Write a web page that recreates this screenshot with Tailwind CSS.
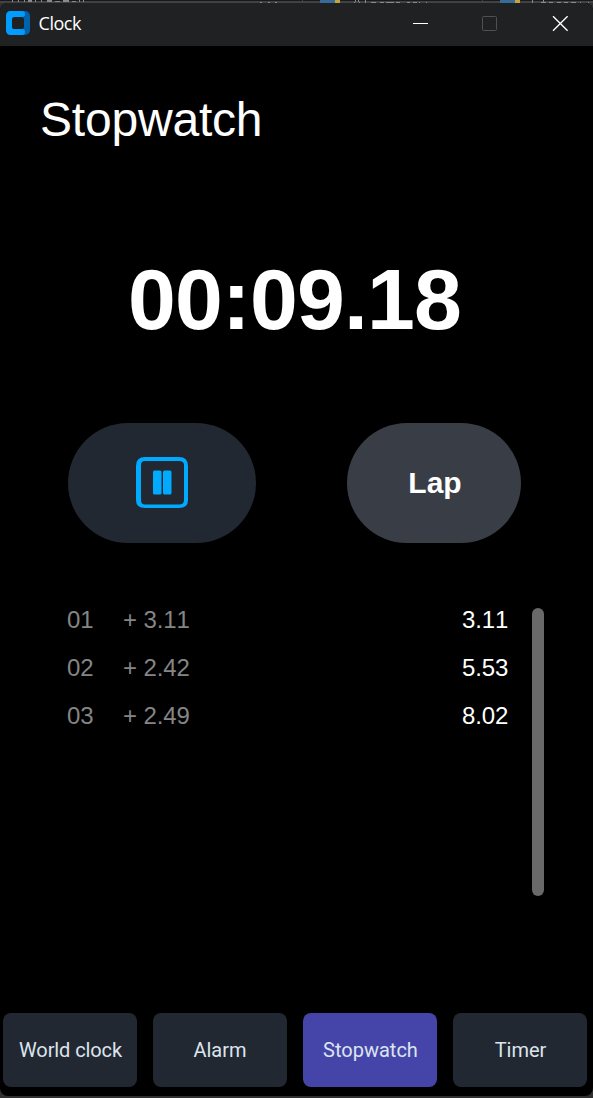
<!DOCTYPE html>
<html lang="en">
<head>
<meta charset="utf-8">
<title>Clock</title>
<script src="https://cdn.jsdelivr.net/npm/@tailwindcss/browser@4"></script>
</head>
<body class="w-[593px] h-[1098px] overflow-hidden bg-black">
<div class="relative w-[593px] h-[1098px] flex flex-col overflow-hidden bg-[#303030] font-['Liberation_Sans',sans-serif] text-white">
  <!-- sliver of the editor window behind -->
  <svg class="block h-[3px] w-full shrink-0" viewBox="0 0 593 3" shape-rendering="crispEdges">
    <rect width="593" height="1" fill="#19191c"/><rect y="1" width="593" height="2" fill="#424143"/>
    <path d="M302 0v1M482 0v1" stroke="#444"/>
    <path d="M320 0h15v3h-15zM500 0h15v3h-15z" fill="#386b95"/>
    <path d="M335 0h5v3h-5zM515 0h5v3h-5z" fill="#c5a43b"/>
    <g fill="#8a8a8c"><path d="M12 0h1v2h-1zM18 0h1v2h-1zM24 0h1v2h-1zM28 0h4v2h-4zM35 0h1v2h-1zM41 0h1v2h-1zM47 0h5v2h-5zM55 1h5v1h-5zM63 0h6v2h-6zM72 1h4v1h-4zM79 0h1v2h-1zM83 0h1v2h-1z"/>
    <path d="M260 2h2v1h-2zM268 2h2v1h-2zM275 2h2v1h-2zM355 0h1v2h-1zM358 0h1v2h-1zM354 2h1v1h-1zM359 2h1v1h-1zM365 0h1v3h-1zM371 2h5v1h-5zM380 2h4v1h-4zM386 2h8v1h-8zM396 2h4v1h-4zM407 2h3v1h-3zM413 2h4v1h-4zM419 2h1v1h-1zM426 2h1v1h-1zM532 0h1v3h-1zM543 0h1v3h-1zM541 2h5v1h-5zM549 2h4v1h-4zM557 2h4v1h-4zM564 2h4v1h-4zM571 2h5v1h-5zM580 2h1v1h-1zM588 2h1v1h-1z"/></g>
  </svg>
  <div class="flex h-[1093px] shrink-0 flex-col overflow-hidden rounded-t-lg rounded-b-lg bg-black">
    <header class="flex h-[43px] shrink-0 items-start bg-[#202122] pl-1.5 pt-2">
      <svg class="shrink-0" width="24" height="24" viewBox="0 0 24 24">
        <rect width="24" height="24" rx="5" fill="#0062ad"/>
        <path d="M5 0H16Q19 0 19 3Q19 6 16 6H9Q6 6 6 9V15Q6 18 9 18H16Q19 18 19 21Q19 24 16 24H5Q0 24 0 19V5Q0 0 5 0Z" fill="#009dff"/>
        <rect x="6" y="6" width="12" height="12" rx="2.5" fill="#202122"/>
      </svg>
      <span class="ml-[8.5px] w-[365.5px] font-['Open_Sans',sans-serif] text-[18px] leading-[25px] tracking-[-0.45px]">Clock</span>
      <svg class="mt-[5px] shrink-0" width="180" height="16" viewBox="404 16 180 16" fill="none">
        <path d="M413 23.5h15" stroke="#fff" stroke-width="1"/>
        <rect x="482.5" y="16.5" width="14" height="14" rx="1" stroke="#505052"/>
        <path d="M553 16.2l14.6 14.6M567.6 16.2L553 30.8" stroke="#fff" stroke-width="1.3"/>
      </svg>
    </header>
    <main class="flex flex-1 flex-col">
      <h1 class="mt-[46px] ml-[40px] text-[48px] leading-[56px] tracking-[-0.2px]">Stopwatch</h1>
      <div class="mt-[103px] h-[96px] pl-[128px] text-[86px] leading-[96px] font-bold tracking-[-0.8px] whitespace-nowrap">00:09.18</div>
      <div class="mt-[76px] flex h-[120px] gap-[91px] pl-[68px]">
        <button class="flex w-[188px] items-center justify-center rounded-[60px] bg-[#222831]" aria-label="Pause">
          <svg width="52" height="52" viewBox="0 0 52 52" fill="#00aaff">
            <path fill-rule="evenodd" d="M9 0H43Q52 0 52 9V43Q52 51 43 51H9Q0 51 0 43V9Q0 0 9 0ZM9 4Q5 4 5 8V43Q5 47.5 9 47.5H43Q48 47.5 48 43V8Q48 4 43 4Z"/>
            <rect x="17" y="13.5" width="8.5" height="24" rx="1.5"/><rect x="27" y="13.5" width="8.5" height="24" rx="1.5"/>
          </svg>
        </button>
        <button class="w-[174px] rounded-[60px] bg-[#393e46] pb-0.5 pl-0.5 text-[30px] font-bold">Lap</button>
      </div>
      <section class="mt-[65px] flex h-[288px] pl-[67px] text-2xl leading-6 tracking-[-0.1px] [font-kerning:none]">
        <div class="flex w-[441px] flex-col gap-6">
          <div class="flex text-[#858585]"><span class="w-14">01</span><span>+ 3.11</span><span class="ml-auto w-[46px] text-white">3.11</span></div>
          <div class="flex text-[#858585]"><span class="w-14">02</span><span>+ 2.42</span><span class="ml-auto w-[46px] text-white">5.53</span></div>
          <div class="flex text-[#858585]"><span class="w-14">03</span><span>+ 2.49</span><span class="ml-auto w-[46px] text-white">8.02</span></div>
        </div>
        <div class="ml-6 w-3 rounded-full bg-[#696969]"></div>
      </section>
      <nav class="mt-[117px] flex h-[74px] gap-4 pl-[3px] font-['Roboto',sans-serif] text-[20px] text-[#dce4ee]">
        <button class="w-[134px] rounded-lg bg-[#222831] pl-px tracking-[-0.1px]">World clock</button>
        <button class="w-[134px] rounded-lg bg-[#222831]">Alarm</button>
        <button class="w-[134px] rounded-lg bg-[#4544a9] pl-px">Stopwatch</button>
        <button class="w-[134px] rounded-lg bg-[#222831] pl-px">Timer</button>
      </nav>
    </main>
  </div>
</div>
</body>
</html>
